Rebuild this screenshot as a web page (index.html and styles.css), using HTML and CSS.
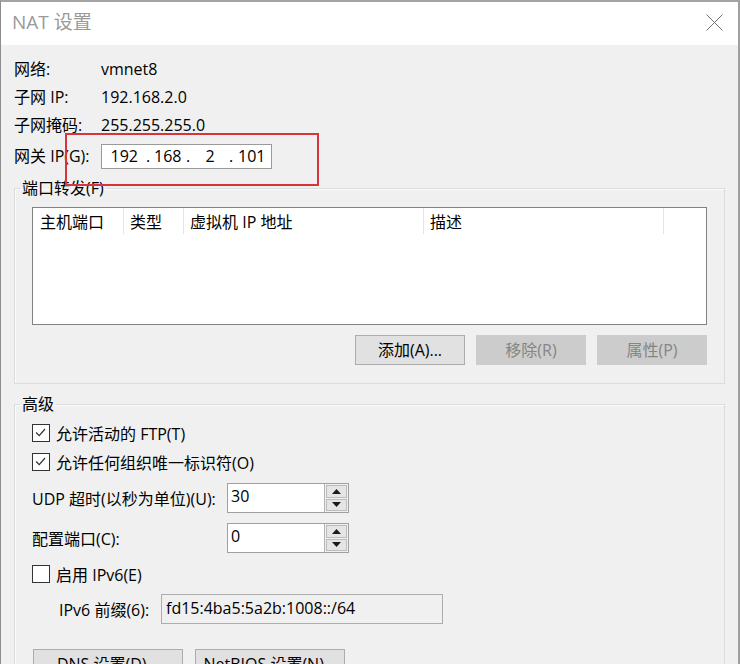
FILE: index.html
```html
<!DOCTYPE html>
<html lang="zh">
<head>
<meta charset="utf-8">
<title>NAT 设置</title>
<link rel="stylesheet" href="styles.css">
</head>
<body>
<div class="window">
  <div class="titlebar">
    <span class="title">NAT 设置</span>
    <svg class="close" viewBox="0 0 17 17" width="17" height="17"><path d="M0.5 0.5 L16.5 16.5 M16.5 0.5 L0.5 16.5" stroke="#6f6f6f" stroke-width="1" fill="none"/></svg>
  </div>
  <div class="content">
    <div class="info">
      <span>网络:</span><span>vmnet8</span>
      <span>子网 IP:</span><span>192.168.2.0</span>
      <span>子网掩码:</span><span>255.255.255.0</span>
      <span class="ip-label">网关 IP(G):</span>
      <div class="ipbox">
        <span class="oct oct1">192</span><span class="dot">.</span><span class="oct oct2">168</span><span class="dot">.</span><span class="oct oct3">2</span><span class="dot dot3">.</span><span class="oct oct4">101</span>
      </div>
    </div>

    <fieldset class="group group-fwd">
      <legend>端口转发(F)</legend>
      <div class="group-inner fwd-inner">
        <div class="list">
          <div class="list-head">
            <span class="col col1">主机端口</span>
            <span class="col col2">类型</span>
            <span class="col col3">虚拟机 IP 地址</span>
            <span class="col col4">描述</span>
          </div>
        </div>
        <div class="btn-row">
          <span class="btn">添加(A)...</span>
          <span class="btn disabled">移除(R)</span>
          <span class="btn disabled">属性(P)</span>
        </div>
      </div>
    </fieldset>

    <fieldset class="group group-adv">
      <legend>高级</legend>
      <div class="group-inner adv-inner">
        <div class="check-row">
          <span class="cb"><svg viewBox="0 0 18 18" width="16" height="16"><polyline points="3.5,8.5 7,12 13.5,4.5" fill="none" stroke="#333" stroke-width="1.4"/></svg></span>
          <span>允许活动的 FTP(T)</span>
        </div>
        <div class="check-row">
          <span class="cb"><svg viewBox="0 0 18 18" width="16" height="16"><polyline points="3.5,8.5 7,12 13.5,4.5" fill="none" stroke="#333" stroke-width="1.4"/></svg></span>
          <span>允许任何组织唯一标识符(O)</span>
        </div>
        <div class="spin-row">
          <span class="spin-label">UDP 超时(以秒为单位)(U):</span>
          <div class="spin">
            <span class="spin-input">30</span>
            <span class="spin-btns">
              <span class="sb"><svg width="9" height="5" viewBox="0 0 9 5"><path d="M0 5 L4.5 0 L9 5 Z" fill="#1a1a1a"/></svg></span>
              <span class="sb"><svg width="9" height="5" viewBox="0 0 9 5"><path d="M0 0 L9 0 L4.5 5 Z" fill="#1a1a1a"/></svg></span>
            </span>
          </div>
        </div>
        <div class="spin-row spin-row2">
          <span class="spin-label">配置端口(C):</span>
          <div class="spin">
            <span class="spin-input">0</span>
            <span class="spin-btns">
              <span class="sb"><svg width="9" height="5" viewBox="0 0 9 5"><path d="M0 5 L4.5 0 L9 5 Z" fill="#1a1a1a"/></svg></span>
              <span class="sb"><svg width="9" height="5" viewBox="0 0 9 5"><path d="M0 0 L9 0 L4.5 5 Z" fill="#1a1a1a"/></svg></span>
            </span>
          </div>
        </div>
        <div class="check-row ipv6-row">
          <span class="cb"></span>
          <span>启用 IPv6(E)</span>
        </div>
        <div class="prefix-row">
          <span class="prefix-label">IPv6 前缀(6):</span>
          <span class="prefix-input">fd15:4ba5:5a2b:1008::/64</span>
        </div>
        <div class="bottom-btns">
          <span class="btn btn-wide">DNS 设置(D)...</span>
          <span class="btn btn-wide">NetBIOS 设置(N)...</span>
        </div>
      </div>
    </fieldset>
  </div>
  <div class="annotation"></div>
</div>
</body>
</html>
```
FILE: styles.css
```css
* { box-sizing: border-box; }
html, body { margin: 0; padding: 0; }
body {
  width: 740px;
  height: 664px;
  overflow: hidden;
  background: #f0f0f0;
  font-family: "Open Sans", "Noto Sans CJK SC", sans-serif;
  font-size: 16px;
  color: #000;
}
.window {
  position: relative;
  width: 740px;
  height: 664px;
  overflow: hidden;
  background: #f0f0f0;
  border-top: 2px solid #a4a4a4;
  border-left: 1px solid #8d8d8d;
  border-right: 2px solid #a0a0a0;
}
.titlebar {
  height: 43px;
  background: #fff;
  display: flex;
  justify-content: space-between;
  align-items: flex-start;
  padding: 7px 15px 0 11px;
}
.title {
  font-size: 19px;
  line-height: 26px;
  color: #9a9a9a;
}
.close { margin-top: 5px; }

.content { padding: 10px 13px 0 13px; }

.info {
  display: grid;
  grid-template-columns: 87px auto;
  grid-template-rows: 28px 28px 28px 30px;
  align-items: center;
  line-height: 20px;
}
.ip-label { align-self: end; line-height: 25px; }
.ipbox {
  align-self: end;
  width: 171px;
  height: 25px;
  background: #fff;
  border: 1px solid #9a9a9a;
  display: flex;
  line-height: 23px;
}
.oct1 { width: 42px; text-align: right; padding-right: 6px; }
.dot { width: 8px; text-align: center; }
.dot3 { width: 6px; }
.oct2 { width: 32px; padding-left: 2px; }
.oct3 { width: 36px; text-align: center; }
.oct4 { padding-left: 4px; }

.group {
  margin: 9px 0 0 0;
  padding: 0;
  min-width: 0;
  border: 1px solid #dcdcdc;
  box-shadow: inset 1px 1px 0 #fbfbfb;
}
.group legend {
  margin-left: 5px;
  padding: 0 2px;
  line-height: 20px;
}
.group-adv { margin-top: 10px; }
.fwd-inner { padding: 9px 17px 18px 17px; }
.adv-inner { padding: 4px 17px 40px 17px; }

.list {
  height: 118px;
  background: #fff;
  border: 1px solid #828282;
}
.list-head {
  display: flex;
  height: 26px;
  line-height: 28px;
}
.col {
  border-right: 1px solid #e5e5e5;
  padding-left: 6px;
  white-space: nowrap;
}
.col1 { width: 91px; padding-left: 7px; }
.col2 { width: 60px; }
.col3 { width: 240px; }
.col4 { width: 240px; }

.btn-row {
  display: flex;
  justify-content: flex-end;
  gap: 11px;
  margin-top: 10px;
}
.btn {
  display: block;
  width: 110px;
  height: 30px;
  border: 1px solid #adadad;
  background: #e1e1e1;
  line-height: 28px;
  text-align: center;
  white-space: nowrap;
}
.btn.disabled {
  background: #cccccc;
  border-color: #cccccc;
  color: #858585;
}

.check-row {
  display: flex;
  align-items: center;
  gap: 6px;
  height: 29px;
}
.cb {
  width: 18px;
  height: 18px;
  border: 1px solid #333;
  background: #fff;
  display: flex;
  align-items: center;
  justify-content: center;
}
.spin-row {
  display: flex;
  align-items: center;
  height: 30px;
  margin-top: 7px;
}
.spin-row2 { margin-top: 10px; }
.spin-label { width: 195px; white-space: nowrap; }
.spin {
  display: flex;
  width: 122px;
  height: 30px;
  border: 1px solid #a0a0a0;
  background: #fff;
}
.spin-input {
  flex: 1;
  padding-left: 3px;
  line-height: 24px;
  border-right: 1px solid #b4b4b4;
}
.spin-btns {
  width: 23px;
  display: flex;
  flex-direction: column;
  gap: 1px;
  padding: 1px;
  background: #f0f0f0;
}
.sb {
  flex: 1;
  border: 1px solid #bcbcbc;
  background: #e5e5e5;
  display: flex;
  align-items: center;
  justify-content: center;
}
.ipv6-row { margin-top: 7px; height: 28px; }
.prefix-row {
  display: flex;
  align-items: center;
  margin-top: 6px;
  padding-left: 27px;
}
.prefix-label { width: 102px; white-space: nowrap; }
.prefix-input {
  width: 282px;
  height: 30px;
  border: 1px solid #adadad;
  background: #f0f0f0;
  padding-left: 4px;
  line-height: 26px;
}
.bottom-btns {
  display: flex;
  gap: 12px;
  margin-top: 25px;
  margin-left: 1px;
}
.btn-wide { width: 150px; }

.annotation {
  position: absolute;
  left: 64px;
  top: 131px;
  width: 254px;
  height: 53px;
  border: 2px solid #d8343e;
}
```
